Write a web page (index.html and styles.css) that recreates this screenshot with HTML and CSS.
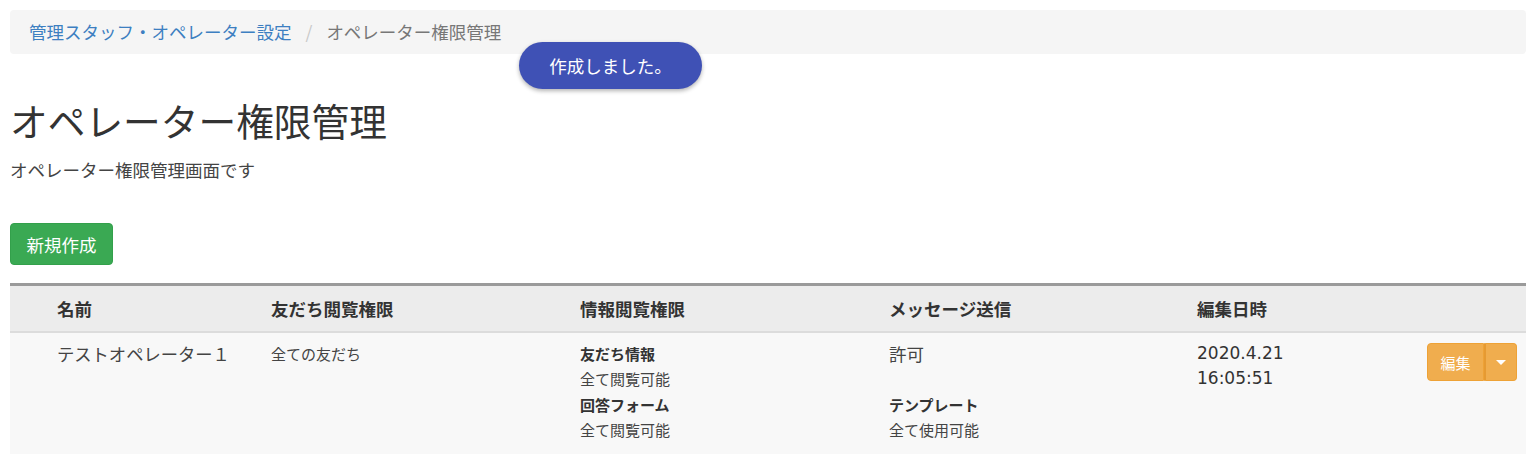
FILE: index.html
```html
<!DOCTYPE html>
<html lang="ja">
<head>
<meta charset="utf-8">
<title>オペレーター権限管理</title>
<link rel="stylesheet" href="styles.css">
</head>
<body>
<div class="page">
  <nav class="breadcrumb">
    <a href="#" class="crumb-link">管理スタッフ・オペレーター設定</a>
    <span class="crumb-sep">/</span>
    <span class="crumb-active">オペレーター権限管理</span>
  </nav>
  <div class="toast">作成しました。</div>

  <h1 class="title">オペレーター権限管理</h1>
  <p class="desc">オペレーター権限管理画面です</p>

  <button class="btn-new">新規作成</button>

  <div class="table">
    <div class="thead">
      <div>名前</div>
      <div>友だち閲覧権限</div>
      <div>情報閲覧権限</div>
      <div>メッセージ送信</div>
      <div>編集日時</div>
      <div></div>
    </div>
    <div class="trow">
      <div class="c-name">テストオペレーター１</div>
      <div class="c-small">全ての友だち</div>
      <div class="c-list">
        <div class="lbl">友だち情報</div>
        <div>全て閲覧可能</div>
        <div class="lbl">回答フォーム</div>
        <div>全て閲覧可能</div>
      </div>
      <div class="c-list">
        <div class="big">許可</div>
        <div></div>
        <div class="lbl">テンプレート</div>
        <div>全て使用可能</div>
      </div>
      <div class="c-date">2020.4.21<br>16:05:51</div>
      <div class="c-action">
        <div class="btn-group">
          <button class="btn-edit">編集</button>
          <button class="btn-caret"><span class="caret"></span></button>
        </div>
      </div>
    </div>
  </div>
</div>
</body>
</html>
```

FILE: styles.css
```css
* { box-sizing: border-box; }
html, body { margin: 0; padding: 0; background: #fff; }
body {
  font-family: "Noto Sans CJK JP", "Noto Sans", "Liberation Sans", sans-serif;
  color: #333;
  font-size: 17.5px;
}
.page { padding: 10px; position: relative; }

.breadcrumb {
  height: 44px;
  background: #f5f5f5;
  border-radius: 4px;
  padding: 0 19px;
  display: flex;
  align-items: center;
  gap: 14px;
  font-size: 17.5px;
  line-height: 22px;
}
.crumb-link { color: #3d7fc1; text-decoration: none; }
.crumb-sep { color: #c8c8c8; }
.crumb-active { color: #777; }

.toast {
  position: absolute;
  left: 519px;
  top: 42px;
  width: 183px;
  height: 47px;
  border-radius: 24px;
  background: #3f51b5;
  color: #fff;
  font-size: 17.5px;
  display: flex;
  align-items: center;
  justify-content: center;
  box-shadow: 0 2px 4px rgba(0,0,0,0.3);
}

.title {
  margin: 43px 0 0;
  font-size: 37.7px;
  font-weight: 400;
  line-height: 46px;
  color: #333;
}
.desc {
  margin: 16px 0 0;
  font-size: 17.5px;
  line-height: 22px;
  color: #444;
}
.btn-new {
  margin-top: 42px;
  display: block;
  height: 42px;
  width: 103px;
  background: #3aa953;
  border: 1px solid #33a04b;
  border-radius: 4px;
  color: #fff;
  font-family: inherit;
  font-size: 17.5px;
  padding: 0;
}

.table {
  margin-top: 18px;
  border-top: 3px solid #9a9a9a;
}
.thead, .trow {
  display: grid;
  grid-template-columns: 214px 309px 309px 308px 1fr 120px;
  padding-left: 47px;
  padding-right: 9px;
}
.thead {
  background: #ececec;
  height: 47px;
  border-bottom: 2px solid #dcdcdc;
  align-items: center;
  font-weight: 700;
  font-size: 17.5px;
  line-height: 22px;
  color: #333;
}
.trow {
  background: #f8f8f8;
  padding-top: 8px;
  padding-bottom: 10px;
  align-items: start;
  min-height: 121px;
}
.c-name { font-size: 17.3px; line-height: 25px; color: #444; }
.c-small { font-size: 15px; line-height: 25px; color: #444; }
.c-list { font-size: 15px; line-height: 25.3px; color: #444; }
.c-list .lbl { font-weight: 700; color: #333; }
.c-list .big { font-size: 17.5px; }
.c-list > div:empty { height: 25.3px; }
.c-date {
  font-family: "DejaVu Sans", "Noto Sans CJK JP", sans-serif;
  font-size: 17px;
  line-height: 25px;
  color: #333;
}
.c-action { display: flex; justify-content: flex-end; padding-top: 2px; }

.btn-group { display: flex; height: 38px; }
.btn-edit, .btn-caret {
  background: #f0ad4e;
  border: 1px solid #eea236;
  color: #fff;
  font-family: inherit;
  font-size: 15px;
  padding: 0;
  height: 38px;
}
.btn-edit { width: 57px; border-radius: 4px 0 0 4px; }
.btn-caret {
  width: 33px;
  border-radius: 0 4px 4px 0;
  border-left: 2px solid #e69a32;
  display: flex;
  align-items: center;
  justify-content: center;
}
.caret {
  width: 0; height: 0;
  border-left: 5px solid transparent;
  border-right: 5px solid transparent;
  border-top: 5px solid #fff;
}
```
